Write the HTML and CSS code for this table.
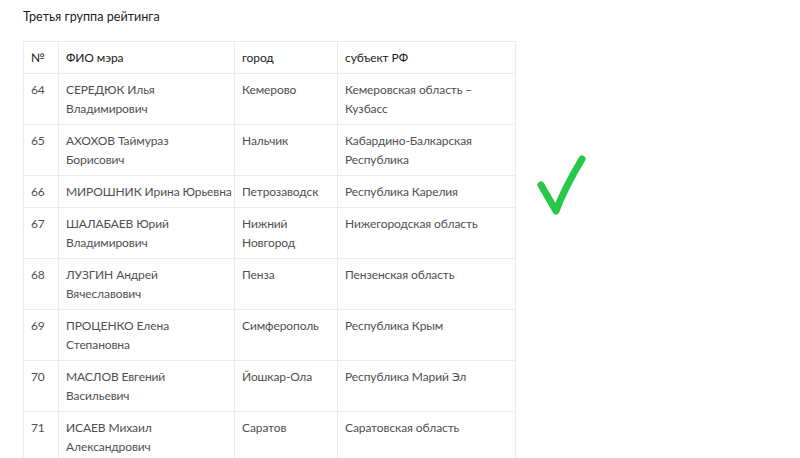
FILE: index.html
```html
<!DOCTYPE html>
<html lang="ru">
<head>
<meta charset="utf-8">
<link rel="stylesheet" href="styles.css">
</head>
<body>
<div class="page">
  <p class="title">Третья группа рейтинга</p>
  <div class="content">
    <table class="rating">
      <colgroup>
        <col class="c-num"><col class="c-name"><col class="c-city"><col class="c-region">
      </colgroup>
      <thead>
        <tr><th>№</th><th>ФИО мэра</th><th>город</th><th>субъект РФ</th></tr>
      </thead>
      <tbody>
        <tr><td>64</td><td>СЕРЕДЮК Илья<br>Владимирович</td><td>Кемерово</td><td>Кемеровская область –<br>Кузбасс</td></tr>
        <tr><td>65</td><td>АХОХОВ Таймураз<br>Борисович</td><td>Нальчик</td><td>Кабардино-Балкарская<br>Республика</td></tr>
        <tr><td>66</td><td>МИРОШНИК Ирина Юрьевна</td><td>Петрозаводск</td><td>Республика Карелия</td></tr>
        <tr><td>67</td><td>ШАЛАБАЕВ Юрий<br>Владимирович</td><td>Нижний<br>Новгород</td><td>Нижегородская область</td></tr>
        <tr><td>68</td><td>ЛУЗГИН Андрей<br>Вячеславович</td><td>Пенза</td><td>Пензенская область</td></tr>
        <tr><td>69</td><td>ПРОЦЕНКО Елена<br>Степановна</td><td>Симферополь</td><td>Республика Крым</td></tr>
        <tr><td>70</td><td>МАСЛОВ Евгений<br>Васильевич</td><td>Йошкар-Ола</td><td>Республика Марий Эл</td></tr>
        <tr><td>71</td><td>ИСАЕВ Михаил<br>Александрович</td><td>Саратов</td><td>Саратовская область</td></tr>
      </tbody>
    </table>
    <svg class="check" width="60" height="70" viewBox="0 0 60 70">
      <path d="M5 34 L20 60 Q28 38 46 8" fill="none" stroke="#27c84a" stroke-width="7" stroke-linecap="round" stroke-linejoin="round"/>
    </svg>
  </div>
</div>
</body>
</html>
```
FILE: styles.css
```css
html, body {
  margin: 0;
  padding: 0;
  background: #ffffff;
}
body {
  font-family: Lato, "Open Sans", "Liberation Sans", sans-serif;
  font-size: 12px;
  color: #4f4f4f;
}
.page {
  padding: 7px 0 0 23px;
}
.title {
  margin: 0;
  font-size: 12.6px;
  line-height: 19px;
  color: #1c1c1c;
}
.content {
  display: flex;
  align-items: flex-start;
  margin-top: 15px;
}
.rating {
  border-collapse: collapse;
  table-layout: fixed;
  width: 492px;
  border: 1px solid #ececec;
  letter-spacing: -0.1px;
}
.c-num { width: 35px; }
.c-name { width: 176px; }
.c-city { width: 103px; }
.c-region { width: 178px; }
.rating th,
.rating td {
  border: 1px solid #ececec;
  padding: 6px 1px 6px 7px;
  line-height: 19px;
  text-align: left;
  vertical-align: top;
  font-weight: 400;
}
.rating th {
  color: #1c1c1c;
}
.check {
  margin: 110px 0 0 20px;
}
```
